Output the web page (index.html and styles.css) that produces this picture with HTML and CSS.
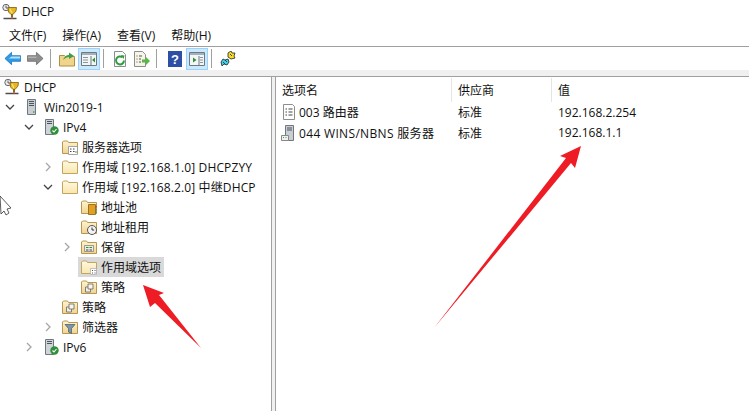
FILE: index.html
```html
<!DOCTYPE html>
<html lang="zh-CN">
<head>
    <meta charset="UTF-8">
    <title>DHCP</title>
    <link rel="stylesheet" href="styles.css">
</head>
<body>
    <svg class="defs" width="0" height="0">
        <defs>
            <linearGradient id="gold" x1="0" y1="0" x2="0" y2="1">
                <stop offset="0" stop-color="#fdf4d2"/>
                <stop offset="1" stop-color="#f0d391"/>
            </linearGradient>
            <linearGradient id="cream" x1="0" y1="0" x2="0" y2="1">
                <stop offset="0" stop-color="#fff9e2"/>
                <stop offset="1" stop-color="#f9e6ad"/>
            </linearGradient>
            <symbol id="trophy" viewBox="0 0 16 16">
                <circle cx="4" cy="3.500" r="3.200" fill="#ececec" stroke="#666"/>
                <path d="M4 1.500V4h2" fill="none" stroke="#444" stroke-width=".8"/>
                <path d="M6 3.500h8.500L14 7l-3 3.500H9L6.500 8z" fill="#e9b51e" stroke="#7a5c0c" stroke-width=".8"/>
                <path d="M8 5l2 4" stroke="#fbe679" stroke-width="1.200"/>
                <path d="M10 10.500v3" stroke="#7a5c0c" stroke-width="1.800"/>
                <path d="M1.500 14.500h13" stroke="#4d4d4d" stroke-width="1.500"/>
                <path d="M10 13.500v1.500" stroke="#c8382c" stroke-width="1.500"/>
            </symbol>
            <symbol id="folder" viewBox="0 0 16 16">
                <path d="M.500 14.500V3l1-1h4l1 1.500h9v11z" fill="url(#cream)" stroke="#c4a55f"/>
            </symbol>
            <symbol id="folder-dark" viewBox="0 0 16 16">
                <path d="M.500 14.500V3l1-1h4l1 1.500h9v11z" fill="url(#gold)" stroke="#b8984f"/>
            </symbol>
            <symbol id="server" viewBox="0 0 16 16">
                <path d="M3.500 .500h8v15h-8z" fill="#c9ced2" stroke="#6f7880"/>
                <path d="M5 2.500h5M5 4.500h5M5 6.500h5" stroke="#4c555c"/>
                <path d="M9 13h1.500" stroke="#46a546" stroke-width="1.500"/>
            </symbol>
            <symbol id="server-ok" viewBox="0 0 16 16">
                <path d="M2.500 .500h8v15h-8z" fill="#cfd4d8" stroke="#6f7880"/>
                <path d="M4 2.500h5M4 4.500h5" stroke="#4c555c"/>
                <circle cx="11.500" cy="11.500" r="4.200" fill="#2f8f3a"/>
                <path d="M9.500 11.500l1.500 1.500 2.500-3" fill="none" stroke="#fff" stroke-width="1.100"/>
            </symbol>
            <symbol id="opts" viewBox="0 0 16 16">
                <use href="#folder-dark"/>
                <path d="M6.500 7.500h9v8h-9z" fill="#fff" stroke="#8f8f8f" stroke-width=".8"/>
                <path d="M8 10h1.500M11 10h1.500M8 12.500h1.500M11 12.500h1.500" stroke="#444"/>
                <path d="M13 13h2" stroke="#46a546"/>
            </symbol>
            <symbol id="scope-opts" viewBox="0 0 16 16">
                <use href="#folder"/>
                <path d="M9.500 9.500h6v6h-6z" fill="#fff" stroke="#aaa" stroke-width=".7"/>
                <path d="M11 11.500h1M13.500 11.500h1M11 14h1M13.500 14h1" stroke="#555"/>
            </symbol>
            <symbol id="pool" viewBox="0 0 16 16">
                <use href="#folder-dark"/>
                <path d="M7.500 5.500h7v10h-7z" fill="#e0a020" stroke="#8a5d10" stroke-width=".8"/>
                <path d="M15 7v1.500" stroke="#c33" stroke-width="1.200"/>
                <path d="M15 10v1.500" stroke="#3a7fc4" stroke-width="1.200"/>
                <path d="M15 13v1.500" stroke="#3a9a4a" stroke-width="1.200"/>
            </symbol>
            <symbol id="lease" viewBox="0 0 16 16">
                <use href="#folder-dark"/>
                <circle cx="11" cy="11" r="4.500" fill="#f4f4f4" stroke="#555"/>
                <path d="M11 8.500V11h2.200" fill="none" stroke="#333"/>
            </symbol>
            <symbol id="reserve" viewBox="0 0 16 16">
                <use href="#folder-dark"/>
                <path d="M3.500 6.500h9v6h-9z" fill="#ecece2" stroke="#777" stroke-width=".7"/>
                <path d="M5 8.500h2.500M8.500 8.500H11" stroke="#2f8f3a" stroke-width="1.200"/>
                <path d="M5 11h2.500M8.500 11H11" stroke="#444" stroke-width="1.200"/>
            </symbol>
            <symbol id="policy" viewBox="0 0 16 16">
                <use href="#folder-dark"/>
                <path d="M4.500 8h5v5h-5z" fill="#f2f0e6" stroke="#666" stroke-width=".8"/>
                <path d="M7 5h5v5H7z" fill="#f7f5ec" stroke="#666" stroke-width=".8"/>
            </symbol>
            <symbol id="filter" viewBox="0 0 16 16">
                <use href="#folder-dark"/>
                <path d="M3 5.500h10L9.500 9.500v5l-3-1.500V9.500z" fill="#7d97a8" stroke="#45596a" stroke-width=".7"/>
            </symbol>
            <symbol id="chev-down" viewBox="0 0 10 10">
                <path d="M1 3l4 4 4-4" fill="none" stroke="#444" stroke-width="1.300"/>
            </symbol>
            <symbol id="chev-right" viewBox="0 0 10 10">
                <path d="M3 1l4 4-4 4" fill="none" stroke="#a6a6a6" stroke-width="1.300"/>
            </symbol>
        </defs>
    </svg>

    <div class="window">
        <!-- Title -->
        <div class="titlebar">
            <svg class="icon"><use href="#trophy"/></svg>
            <span>DHCP</span>
        </div>

        <div class="menubar">
            <span>文件(F)</span>
            <span>操作(A)</span>
            <span>查看(V)</span>
            <span>帮助(H)</span>
        </div>

        <!-- Toolbar -->
        <div class="toolbar">
            <button class="tool nav"><svg viewBox="0 0 18 14"><path d="M1 7l7-6.500V4h9.500v6H8v3.500z" fill="#2f9be6" stroke="#1a6fb5" stroke-width=".8"/><path d="M8 5h9v2H5z" fill="#b5e2fa"/></svg></button>
            <button class="tool nav"><svg viewBox="0 0 18 14"><path d="M17 7L10 .500V4H.500v6H10v3.500z" fill="#8d8d8d" stroke="#666" stroke-width=".8"/><path d="M1 5h9v1.500H1z" fill="#b4b4b4"/></svg></button>
            <i class="sep"></i>
            <button class="tool"><svg viewBox="0 0 16 16"><path d="M.500 15V4.500h5l1 1h9V15z" fill="#f0d48a" stroke="#b08f45"/><path d="M4 9c1-3 3-5 6-5V1.500L15 5l-5 3V6C8 6 6 7 4 9z" fill="#3f9e4a"/></svg></button>
            <button class="tool on"><svg viewBox="0 0 16 16"><path d="M.500 1.500h15v13H.500z" fill="#f4f6f6" stroke="#6d7a82"/><path d="M1 2h14v2H1z" fill="#9fb2bd"/><path d="M10 5v9" stroke="#6d7a82"/><path d="M2 6.500h5M2 9h5M2 11.500h5" stroke="#8a969d"/><path d="M14 6.500v5L11 9z" fill="#2f8f3a"/></svg></button>
            <i class="sep"></i>
            <button class="tool"><svg viewBox="0 0 16 16"><path d="M2.500 .500h8l3 3v12h-11z" fill="#fbfbfb" stroke="#8d8d8d"/><path d="M12 9.500a4 4 0 1 1-1.500-3.200" fill="none" stroke="#2f9c3f" stroke-width="2"/><path d="M9 4l3.500.500-1 3.500z" fill="#2f9c3f"/></svg></button>
            <button class="tool"><svg viewBox="0 0 16 16"><path d="M.500 .500h8l3 3v12H.500z" fill="#f7f5e6" stroke="#8d8d8d"/><path d="M2.500 5h1M5 5h3M2.500 8h1M5 8h2M2.500 11h1M5 11h2" stroke="#555"/><path d="M8 8.500h4V6l4 4-4 4v-2.500H8z" fill="#58b848"/></svg></button>
            <i class="sep wide"></i>
            <button class="tool"><svg viewBox="0 0 16 16"><path d="M1 0h14v16H1z" fill="#2e4fa6"/><text class="help-mark" x="8" y="13" text-anchor="middle">?</text></svg></button>
            <button class="tool on"><svg viewBox="0 0 16 16"><path d="M.500 1.500h15v13H.500z" fill="#f4f6f6" stroke="#6d7a82"/><path d="M1 2h14v2H1z" fill="#9fb2bd"/><path d="M10 5v9" stroke="#6d7a82"/><path d="M11 6.500h3M11 9h3M11 11.500h3" stroke="#8a969d"/><path d="M4 6.500v5L7.500 9z" fill="#2f8f3a"/></svg></button>
            <i class="sep"></i>
            <button class="tool"><svg viewBox="0 0 16 16"><path d="M8 2l3-2 1 2 3 0-1 3 1 2-4 1-3-2z" fill="#f5dd28" stroke="#222" stroke-width=".8"/><path d="M1 11l2-3 2 1 3-1 1 3-2 3-3-1-2 2z" fill="#3fd0e8" stroke="#222" stroke-width=".8"/><path d="M3 11l2 2M5 9l2 2M10 3l2 2" stroke="#222" stroke-width=".8"/></svg></button>
        </div>

        <div class="strip"></div>

        <!-- Panes -->
        <div class="panes">
            <div class="tree">
                <div class="row root"><svg class="icon"><use href="#trophy"/></svg><span>DHCP</span></div>
                <div class="row lv0"><svg class="twist"><use href="#chev-down"/></svg><svg class="icon"><use href="#server"/></svg><span>Win2019-1</span></div>
                <div class="row lv1"><svg class="twist"><use href="#chev-down"/></svg><svg class="icon"><use href="#server-ok"/></svg><span>IPv4</span></div>
                <div class="row lv2"><i class="twist"></i><svg class="icon"><use href="#opts"/></svg><span>服务器选项</span></div>
                <div class="row lv2"><svg class="twist"><use href="#chev-right"/></svg><svg class="icon"><use href="#folder"/></svg><span class="roomy">作用域 [192.168.1.0] DHCPZYY</span></div>
                <div class="row lv2"><svg class="twist"><use href="#chev-down"/></svg><svg class="icon"><use href="#folder"/></svg><span class="roomy">作用域 [192.168.2.0] 中继DHCP</span></div>
                <div class="row lv3"><i class="twist"></i><svg class="icon"><use href="#pool"/></svg><span>地址池</span></div>
                <div class="row lv3"><i class="twist"></i><svg class="icon"><use href="#lease"/></svg><span>地址租用</span></div>
                <div class="row lv3"><svg class="twist"><use href="#chev-right"/></svg><svg class="icon"><use href="#reserve"/></svg><span>保留</span></div>
                <div class="row lv3"><i class="twist"></i><div class="selected"><svg class="icon"><use href="#scope-opts"/></svg><span>作用域选项</span></div></div>
                <div class="row lv3"><i class="twist"></i><svg class="icon"><use href="#policy"/></svg><span>策略</span></div>
                <div class="row lv2"><i class="twist"></i><svg class="icon"><use href="#policy"/></svg><span>策略</span></div>
                <div class="row lv2"><svg class="twist"><use href="#chev-right"/></svg><svg class="icon"><use href="#filter"/></svg><span>筛选器</span></div>
                <div class="row lv1"><svg class="twist"><use href="#chev-right"/></svg><svg class="icon"><use href="#server-ok"/></svg><span>IPv6</span></div>
            </div>

            <div class="list">
                <div class="list-head">
                    <div class="col-name">选项名</div>
                    <div class="col-vendor">供应商</div>
                    <div class="col-value">值</div>
                </div>
                <div class="list-row">
                    <div class="col-name">
                        <svg class="icon" viewBox="0 0 16 16"><path d="M2.500 .500h9l2 2v13h-11z" fill="#fff" stroke="#8d8d8d"/><path d="M4.500 5h1.500M7.500 5h4M4.500 8h1.500M7.500 8h4M4.500 11h1.500M7.500 11h4" stroke="#444"/></svg>
                        <span>003 路由器</span>
                    </div>
                    <div class="col-vendor">标准</div>
                    <div class="col-value">192.168.2.254</div>
                </div>
                <div class="list-row">
                    <div class="col-name">
                        <svg class="icon" viewBox="0 0 16 16"><path d="M4.500 .500h8v15h-8z" fill="#c9ced2" stroke="#6f7880"/><path d="M6 3h5M6 5h5" stroke="#4c555c"/><path d="M.500 10.500h7v5h-7z" fill="#f0f0f0" stroke="#888"/><path d="M2 12.500h1M4.500 12.500h1" stroke="#46a546"/></svg>
                        <span class="roomier">044 WINS/NBNS 服务器</span>
                    </div>
                    <div class="col-vendor">标准</div>
                    <div class="col-value">192.168.1.1</div>
                </div>
            </div>
        </div>
    </div>

    <!-- Annotation arrows and mouse pointer, on top of the window -->
    <svg class="overlay" viewBox="0 0 749 411">
        <path d="M581 146L560 156 566 158 434 328 571 163 575 168z" fill="#ee1c25"/>
        <path d="M143 285L164 293 159 295 201 348 155 303 150 307z" fill="#ee1c25"/>
        <path d="M0 196l11 12-4 1 2 4-3 2-2-4-3 3z" fill="#fff" stroke="#333" stroke-width=".8"/>
    </svg>
</body>
</html>
```

FILE: styles.css
```css
* {
    margin: 0;
    padding: 0;
    box-sizing: border-box;
}

body {
    width: 749px;
    height: 411px;
    overflow: hidden;
    background-color: #fff;
    color: #111;
    font-family: "Open Sans", "Noto Sans CJK SC", sans-serif;
    font-size: 12px;
    position: relative;
}

.defs {
    position: absolute;
}

.window {
    height: 100%;
    display: flex;
    flex-direction: column;
}

.icon {
    width: 16px;
    height: 16px;
    flex: none;
}

/* Title and menu */
.titlebar {
    height: 23px;
    padding-left: 2px;
    display: flex;
    align-items: center;
    gap: 4px;
}

.menubar {
    height: 24px;
    padding-left: 9px;
    display: flex;
    align-items: center;
    gap: 16px;
    border-bottom: 1px solid #a0a0a0;
}

/* Toolbar */
.toolbar {
    height: 23px;
    padding-left: 1px;
    display: flex;
    align-items: center;
}

.tool {
    width: 22px;
    height: 22px;
    border: 1px solid transparent;
    background: none;
    display: flex;
    align-items: center;
    justify-content: center;
}

.tool svg {
    width: 16px;
    height: 16px;
}

.tool.nav {
    width: 23px;
}

.tool.nav svg {
    width: 17px;
    height: 15px;
}

.tool.on {
    background-color: #cce8ff;
    border-color: #99d1ff;
}

.help-mark {
    fill: #fff;
    font-size: 13px;
    font-weight: bold;
}

.sep {
    width: 1px;
    height: 19px;
    margin: 0 5px 0 3px;
    background-color: #a0a0a0;
}

.sep.wide {
    margin-right: 7px;
}

.strip {
    height: 7px;
    background-color: #f0f0f0;
    border-bottom: 1px solid #a0a0a0;
}

/* Panes */
.panes {
    flex: 1;
    display: flex;
    min-height: 0;
    background-color: #f0f0f0;
}

.tree {
    width: 272px;
    background-color: #fff;
    border-right: 1px solid #a0a0a0;
}

.row {
    height: 20px;
    display: flex;
    align-items: center;
    white-space: nowrap;
}

.row .icon {
    margin-right: 4px;
}

.row.root { padding-left: 4px; }
.row.lv0 { padding-left: 5px; }
.row.lv1 { padding-left: 24px; }
.row.lv2 { padding-left: 43px; }
.row.lv3 { padding-left: 62px; }

.twist {
    width: 10px;
    height: 10px;
    flex: none;
    margin-right: 9px;
}

.selected {
    height: 20px;
    margin-left: -3px;
    padding: 0 3px;
    display: flex;
    align-items: center;
    background-color: #d9d9d9;
}

.roomy {
    letter-spacing: .12px;
}

.roomier {
    letter-spacing: .33px;
}

.list {
    flex: 1;
    margin-left: 3px;
    padding-top: 1px;
    background-color: #fff;
    border-left: 1px solid #a0a0a0;
}

.list-head {
    height: 24px;
    display: flex;
    align-items: center;
}

.list-head > div {
    height: 24px;
    display: flex;
    align-items: center;
    border-right: 1px solid #e5e5e5;
}

.list-head .col-value {
    border-right: none;
}

.col-name {
    width: 176px;
    padding-left: 6px;
}

.col-vendor {
    width: 100px;
    padding-left: 6px;
}

.col-value {
    padding-left: 6px;
}

.list-row {
    height: 20.5px;
    display: flex;
    align-items: center;
}

.list-row .col-name {
    display: flex;
    align-items: center;
    gap: 2px;
    padding-left: 5px;
    white-space: nowrap;
}

.overlay {
    position: absolute;
    left: 0;
    top: 0;
    width: 749px;
    height: 411px;
    pointer-events: none;
}
```
